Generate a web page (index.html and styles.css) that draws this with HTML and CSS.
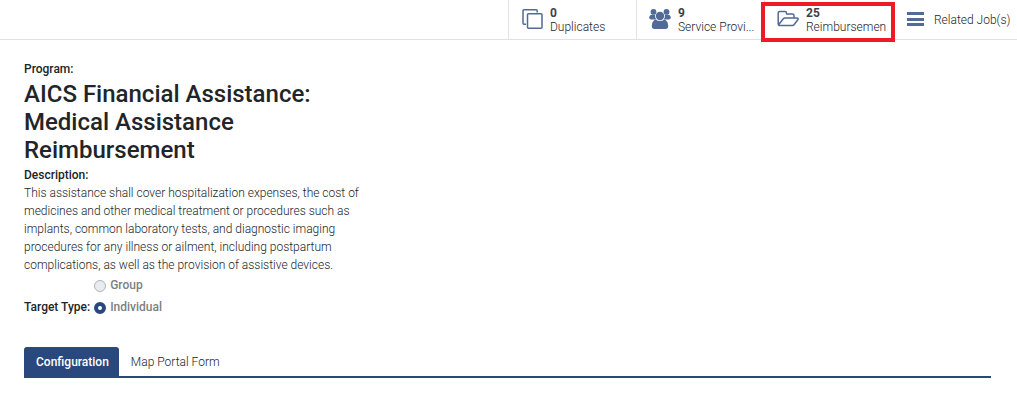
FILE: index.html
```html
<!DOCTYPE html>
<html lang="en">
<head>
<meta charset="utf-8">
<title>AICS Financial Assistance</title>
<link rel="stylesheet" href="styles.css">
</head>
<body>
<header class="statbar">
  <button class="stat" type="button">
    <svg class="icon" viewBox="0 0 22 22" fill="none" stroke="currentColor" stroke-width="1.5"><path d="M5 15.200H3Q2 15.200 2 14.200V1.700Q2 0.800 3 0.800H15.200Q16.200 0.800 16.200 1.700V3.500"/><rect x="6.500" y="4.800" width="14.500" height="14.500" rx="1"/></svg>
    <span class="stat-text"><strong class="stat-value">0</strong><span class="stat-label">Duplicates</span></span>
  </button>
  <button class="stat" type="button">
    <svg class="icon" viewBox="0 0 22 22" fill="currentColor"><circle cx="4.500" cy="2.900" r="2.900"/><circle cx="17.500" cy="2.900" r="2.900"/><path d="M1.800 6H6Q5.800 8.800 7.600 10.500H2.200Q0.200 10.500 0.200 8.500Q0.200 6.500 1.800 6zM20.200 6H16Q16.200 8.800 14.400 10.500H19.800Q21.800 10.500 21.800 8.500Q21.800 6.500 20.200 6z"/><circle cx="11" cy="7" r="4.200"/><path d="M6.500 10.500Q11 13.500 15.500 10.500Q19.200 12 19.200 17Q19.200 20 16.500 20H5.500Q2.800 20 2.800 17Q2.800 12 6.500 10.500z"/></svg>
    <span class="stat-text"><strong class="stat-value">9</strong><span class="stat-label">Service Provi...</span></span>
  </button>
  <button class="stat stat-marked" type="button">
    <svg class="icon" viewBox="0 0 22 22" fill="none" stroke="currentColor" stroke-width="1.500" stroke-linejoin="round"><path d="M17 9V6.500Q17 5 15.500 5H9.500V4.200Q9.500 2.500 8 2.500H2.700Q1.200 2.500 1.200 4V15Q1.200 16.500 2.700 16.500H15.500Q16.500 16.500 17 15.800L21 10.500Q21.600 9 20 9H8Q7 9 6.300 9.800L1.600 15.800"/></svg>
    <span class="stat-text"><strong class="stat-value">25</strong><span class="stat-label">Reimbursement</span></span>
  </button>
  <button class="stat stat-last" type="button">
    <svg class="icon" viewBox="0 0 22 22" fill="currentColor"><path d="M2 3h17v3H2zM2 9h17v3H2zM2 14h17v3H2z"/></svg>
    <span class="stat-label">Related Job(s)</span>
  </button>
</header>
<main class="sheet">
  <section class="program">
    <div class="label">Program:</div>
    <h1 class="title">AICS Financial Assistance: Medical Assistance Reimbursement</h1>
    <div class="label">Description:</div>
    <p class="description">This assistance shall cover hospitalization expenses, the cost of medicines and other medical treatment or procedures such as implants, common laboratory tests, and diagnostic imaging procedures for any illness or ailment, including postpartum complications, as well as the provision of assistive devices.</p>
    <div class="target" role="radiogroup" aria-labelledby="target-label">
      <span class="label" id="target-label">Target Type:</span>
      <div class="options">
        <label class="option"><input class="radio" type="radio" name="target">Group</label>
        <label class="option"><input class="radio" type="radio" name="target" checked>Individual</label>
      </div>
    </div>
  </section>
  <nav class="tabs">
    <a class="tab tab-active" href="#configuration">Configuration</a>
    <a class="tab" href="#portal">Map Portal Form</a>
  </nav>
</main>
</body>
</html>
```
FILE: styles.css
```css
* { box-sizing: border-box; }
body {
  margin: 0;
  background: #fff;
  color: #212529;
  font: 12px/18px Roboto, sans-serif;
}
.statbar {
  display: flex;
  justify-content: flex-end;
  height: 40px;
  border-bottom: 1px solid #dee2e6;
}
.stat {
  position: relative;
  display: flex;
  align-items: center;
  gap: 7px;
  width: 128px;
  padding: 0 6px 0 12px;
  border: 0;
  border-left: 1px solid #dee2e6;
  background: none;
  color: #212529;
  font: inherit;
  font-weight: 300;
  line-height: 14px;
  text-align: left;
  white-space: nowrap;
}
.stat-last { width: 125px; border-left-color: transparent; }
.stat-marked::after {
  content: "";
  position: absolute;
  inset: 2px -3px -3px -4px;
  border: 4px solid #ed1c24;
}
.icon { flex: none; width: 22px; height: 22px; color: #526a97; }
.stat-text { display: flex; flex-direction: column; min-width: 0; overflow: hidden; }
.stat-value { color: #3c4248; font-weight: 700; }
.program { width: 350px; }
.sheet { padding: 20px 26px 0 24px; }
.label { color: #212529; font-weight: 500; }
.title { margin: 2px 0; font-size: 24px; font-weight: 500; line-height: 28px; }
.description { margin: 0; color: #212529; font-weight: 300; }
.target { display: flex; align-items: flex-end; gap: 4px; margin-top: 2px; }
.options { display: flex; flex-direction: column; gap: 4px; }
.option { display: flex; align-items: center; gap: 4px; color: #7b7f83; font-weight: 500; }
.radio {
  appearance: none;
  width: 12px;
  height: 12px;
  margin: 2px 0 0;
  border: 1px solid #adb5bd;
  border-radius: 50%;
  background: #e9ecef;
}
.radio:checked { border: 4px solid #29487d; background: #fff; }
.tabs { display: flex; margin-top: 31px; border-bottom: 2px solid #29487d; }
.tab {
  padding: 6px 10px 5px 12px;
  border-radius: 3px 3px 0 0;
  color: #212529;
  font-weight: 300;
  text-decoration: none;
}
.tab-active { background: #29487d; color: #fff; font-weight: 500; }
```
